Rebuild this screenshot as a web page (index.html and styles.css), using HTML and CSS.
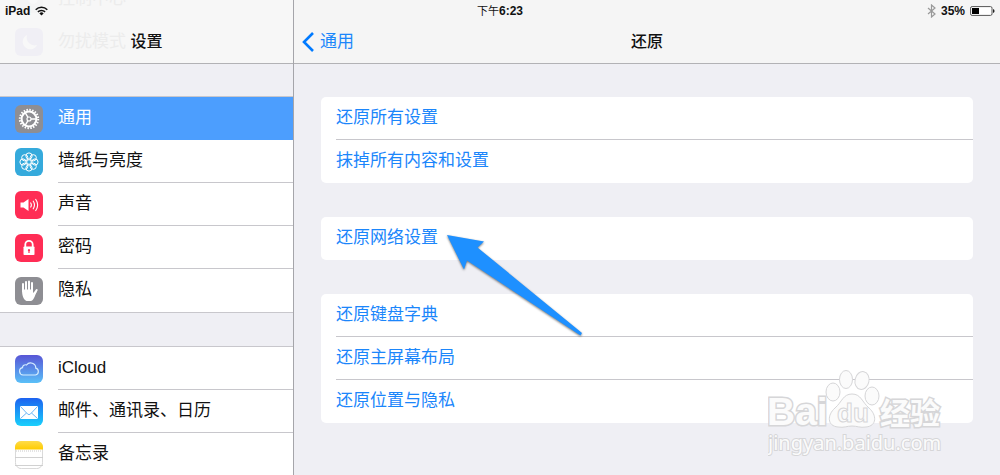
FILE: index.html
```html
<!DOCTYPE html>
<html lang="zh-CN">
<head>
<meta charset="utf-8">
<meta name="viewport" content="width=device-width, initial-scale=1">
<title>设置</title>
<link rel="stylesheet" href="styles.css">
</head>
<body>
<div class="app">
  <div class="status">
    <div class="status-left">
      <span>iPad</span>
      <svg class="wifi" viewBox="0 0 13 10" aria-hidden="true"><g fill="none" stroke="#111" stroke-width="1.5"><path d="M.7 3.7a8.3 8.3 0 0 1 11.6 0"/><path d="M2.9 5.9a5.1 5.1 0 0 1 7.2 0"/></g><path d="M6.5 9.6 4.4 7.4a3 3 0 0 1 4.2 0z" fill="#111"/></svg>
    </div>
    <div class="status-time"><span class="period">下午</span>6:23</div>
    <div class="status-right">
      <svg class="bluetooth" viewBox="0 0 9 14" aria-hidden="true"><path d="M1 4l7 6-3.5 3V1L8 4l-7 6" fill="none" stroke="#999" stroke-width="1.2"/></svg>
      <span>35%</span>
      <svg class="battery" viewBox="0 0 25 10" aria-hidden="true"><rect x=".6" y=".6" width="21.4" height="8.8" rx="1.5" fill="#fff" stroke="#555" stroke-width="1"/><rect x="2" y="2" width="7" height="6" fill="#000"/><path d="M23 3q1.6.4 1.6 2T23 7z" fill="#222"/></svg>
    </div>
  </div>

  <aside class="sidebar">
    <header class="bar">
      <div class="ghost" aria-hidden="true">
        <div class="ghost-row"><svg class="icon" viewBox="0 0 28 28"><rect width="28" height="28" rx="6" fill="#f4f4f4"/><circle cx="18" cy="14" r="5" fill="#f8f8f8"/></svg><span>控制中心</span></div>
        <div class="ghost-row"><svg class="icon" viewBox="0 0 28 28"><rect width="28" height="28" rx="6" fill="#f0eff5"/><path d="M12 7a7.5 7.5 0 1 0 10 10A8 8 0 0 1 12 7z" fill="#f8f8f8"/></svg><span>勿扰模式</span></div>
      </div>
      <h1 class="title">设置</h1>
    </header>
    <nav class="menu">
      <ul class="group">
        <li><a class="item active" href="#general">
          <svg class="icon" viewBox="0 0 28 28" aria-hidden="true"><rect width="28" height="28" rx="6" fill="#8e8e93"/><g fill="none" stroke="#fff"><circle cx="14" cy="14" r="9.2" stroke-width="2" stroke-dasharray="1.5 1.39"/><circle cx="14" cy="14" r="7.4" stroke-width="2"/><circle cx="14" cy="14" r="2" stroke-width="1.2"/><path d="M16 14h5M13 12.300l-3-5M13 15.700l-3 5" stroke-width="1.400"/></g></svg>
          <span class="label">通用</span></a></li>
        <li><a class="item" href="#wallpaper">
          <svg class="icon" viewBox="0 0 28 28" aria-hidden="true"><rect width="28" height="28" rx="6" fill="#35aadc"/><g fill="none" stroke="#fff" stroke-width="1"><circle cx="14" cy="14" r="2.300"/><circle cx="14" cy="8" r="3.100"/><circle cx="18.240" cy="9.760" r="3.100"/><circle cx="20" cy="14" r="3.100"/><circle cx="18.240" cy="18.240" r="3.100"/><circle cx="14" cy="20" r="3.100"/><circle cx="9.760" cy="18.240" r="3.100"/><circle cx="8" cy="14" r="3.100"/><circle cx="9.760" cy="9.760" r="3.100"/></g></svg>
          <span class="label">墙纸与亮度</span></a></li>
        <li><a class="item" href="#sound">
          <svg class="icon" viewBox="0 0 28 28" aria-hidden="true"><rect width="28" height="28" rx="6" fill="#ff2d55"/><path d="M5.500 11.500h3l5-3.500v12l-5-3.500h-3z" fill="#fff"/><g fill="none" stroke="#fff" stroke-width="1.100"><path d="M15.500 11.500q1.800 2.500 0 5"/><path d="M18 9.800q3 4.200 0 8.400"/><path d="M20.500 8q4.300 6 0 12"/></g></svg>
          <span class="label">声音</span></a></li>
        <li><a class="item" href="#passcode">
          <svg class="icon" viewBox="0 0 28 28" aria-hidden="true"><rect width="28" height="28" rx="6" fill="#ff2d55"/><path d="M10.300 13v-2.500a3.700 3.700 0 0 1 7.400 0V13" fill="none" stroke="#fff" stroke-width="1.800"/><rect x="8.500" y="12.500" width="11" height="8.500" rx=".8" fill="#fff"/><path d="M14 15a1.200 1.200 0 0 1 .6 2.200V19h-1.200v-1.800A1.200 1.200 0 0 1 14 15z" fill="#ff2d55"/></svg>
          <span class="label">密码</span></a></li>
        <li><a class="item" href="#privacy">
          <svg class="icon" viewBox="0 0 28 28" aria-hidden="true"><rect width="28" height="28" rx="6" fill="#8e8e93"/><g stroke="#fff" stroke-width="2" stroke-linecap="round" fill="none"><path d="M8 14V7M11 13V5M14 13V4.500M17 14V6"/><path d="M18.500 18l3.200-5"/></g><path d="M7 12.500h11v3.500l2.500-2 1.500.5c-2 3-2.500 8.500-6 9.500h-4.500C8 22 7 18 7 12.500z" fill="#fff"/></svg>
          <span class="label">隐私</span></a></li>
      </ul>
      <ul class="group">
        <li><a class="item" href="#icloud">
          <svg class="icon" viewBox="0 0 28 28" aria-hidden="true"><defs><linearGradient id="cloud" x2="0" y2="1"><stop stop-color="#5856d6"/><stop offset="1" stop-color="#5ac0f8"/></linearGradient></defs><rect width="28" height="28" rx="6" fill="url(#cloud)"/><path d="M8 20a3.700 3.700 0 0 1-.5-7.300 2.900 2.900 0 0 1 4-2.700 5.200 5.200 0 0 1 9.300 3.200A3.500 3.500 0 0 1 20.500 20z" fill="none" stroke="#d5edff" stroke-width="1.200"/></svg>
          <span class="label">iCloud</span></a></li>
        <li><a class="item" href="#mail">
          <svg class="icon" viewBox="0 0 28 28" aria-hidden="true"><defs><linearGradient id="mail" x2="0" y2="1"><stop stop-color="#1d62f0"/><stop offset="1" stop-color="#19d0fc"/></linearGradient></defs><rect width="28" height="28" rx="6" fill="url(#mail)"/><rect x="5" y="8" width="18" height="13" rx="1" fill="#fff"/><path d="M5.500 8.500l7 7.500q1.500 1.300 3 0l7-7.500M5.500 20.500l6-5.500M22.500 20.500l-6-5.500" fill="none" stroke="#5aaef5" stroke-width=".9"/></svg>
          <span class="label">邮件、通讯录、日历</span></a></li>
        <li><a class="item" href="#notes">
          <svg class="icon" viewBox="0 0 28 28" aria-hidden="true"><defs><linearGradient id="notes" x2="0" y2="1"><stop stop-color="#ffdc4a"/><stop offset="1" stop-color="#fc0"/></linearGradient></defs><rect x=".4" y=".4" width="27.200" height="27.200" rx="6" fill="#fff" stroke="#ccc" stroke-width=".8"/><path d="M0 8.500V6a6 6 0 0 1 6-6h16a6 6 0 0 1 6 6v2.500z" fill="url(#notes)"/><path d="M1 10h26" stroke="#bbb" stroke-width=".8" stroke-dasharray="1 1"/><path d="M0 16.500h28M0 24.500h28" stroke="#ccc" stroke-width=".9"/></svg>
          <span class="label">备忘录</span></a></li>
      </ul>
    </nav>
  </aside>

  <main class="detail">
    <header class="bar detail-bar">
      <a class="back" href="#general"><svg class="chevron" viewBox="0 0 12 20" aria-hidden="true"><path d="M11 1 2 10l9 9" fill="none" stroke="#007aff" stroke-width="2.600"/></svg><span>通用</span></a>
      <h2 class="title">还原</h2>
    </header>
    <div class="cards">
      <section class="card">
        <button class="action" type="button">还原所有设置</button>
        <button class="action" type="button">抹掉所有内容和设置</button>
      </section>
      <section class="card">
        <button class="action" type="button">还原网络设置</button>
      </section>
      <section class="card">
        <button class="action" type="button">还原键盘字典</button>
        <button class="action" type="button">还原主屏幕布局</button>
        <button class="action" type="button">还原位置与隐私</button>
      </section>
    </div>
    <svg class="arrow" viewBox="0 0 140 106" aria-hidden="true"><path d="M2 3 39 9.500 32.500 15.500 137 101 135.500 103.500 22 28.500 19 37.500z" fill="#1e90ff"/></svg>
    <svg class="watermark" viewBox="0 0 190 90" role="img" aria-label="Baidu 经验">
      <g class="mark">
        <text class="mark-latin" x="-1" y="58">Bai</text>
        <ellipse cx="65" cy="25" rx="7" ry="9"/>
        <ellipse cx="78" cy="12.500" rx="6.500" ry="9"/>
        <ellipse cx="94" cy="13.500" rx="7" ry="9" transform="rotate(12 94 13.500)"/>
        <ellipse cx="104" cy="29" rx="7" ry="9"/>
        <path d="M84 27c9 0 10 8 17 14 8 7 8 18-3 19-6 1-9-1-14-1s-8 2-14 1c-11-1-11-12-3-19 7-6 8-14 17-14z"/>
        <text class="mark-du" x="69" y="55">du</text>
        <text class="mark-cjk" x="112" y="57">经验</text>
        <text class="mark-url" x="0" y="83">jingyan.baidu.com</text>
      </g>
    </svg>
  </main>
</div>
</body>
</html>
```

FILE: styles.css
```css
* {
  box-sizing: border-box;
}

body {
  margin: 0;
  background: #efeff4;
  color: #111;
  font-family: "Liberation Sans", "Noto Sans CJK SC", sans-serif;
  font-size: 17px;
  line-height: 20px;
}

.app {
  display: grid;
  grid-template-columns: 294px 1fr;
  grid-template-rows: minmax(0, 1fr);
  height: 100vh;
  overflow: hidden;
}

.status {
  grid-area: 1 / 1 / 2 / 3;
  align-self: start;
  z-index: 2;
  display: grid;
  grid-template-columns: 1fr auto 1fr;
  align-items: center;
  height: 21px;
  padding: 0 5px;
  font-size: 12px;
  font-weight: bold;
}

.period {
  font-size: 11px;
  font-weight: 400;
}

.status-left,
.status-right {
  display: flex;
  align-items: center;
  gap: 5px;
}

.status-right {
  justify-content: flex-end;
}

.wifi {
  width: 13px;
  height: 10px;
}

.bluetooth {
  width: 9px;
  height: 14px;
}

.battery {
  width: 25px;
  height: 10px;
}

.sidebar {
  grid-area: 1 / 1;
  overflow: hidden;
  border-right: 1px solid #a5a5aa;
}

.detail {
  grid-area: 1 / 2;
  position: relative;
  overflow: hidden;
}

.bar {
  display: grid;
  grid-template-rows: 63px;
  align-items: center;
  border-bottom: 1px solid #b2b2b5;
  background: #f7f7f7;
}

.detail-bar {
  grid-template-columns: 1fr auto 1fr;
  background: #f5f5f5;
}

.title {
  grid-area: 1 / 1;
  justify-self: center;
  margin: 0;
  padding-top: 20px;
  font-size: 16px;
  font-weight: 500;
}

.detail-bar .title {
  grid-area: 1 / 2;
}

.ghost {
  grid-area: 1 / 1;
  align-self: end;
  display: flex;
  flex-direction: column;
  justify-content: flex-end;
  height: 63px;
  overflow: hidden;
  color: #ececec;
}

.ghost-row {
  display: flex;
  flex: none;
  align-items: center;
  gap: 15px;
  height: 43px;
  padding-left: 15px;
}

.back {
  display: flex;
  align-items: center;
  gap: 6px;
  padding: 20px 0 0 8px;
  color: #1b86fb;
  font-size: 17px;
  text-decoration: none;
}

.chevron {
  width: 12px;
  height: 20px;
}

.menu,
.cards {
  display: flex;
  flex-direction: column;
  gap: 34px;
  padding-top: 33px;
}

.menu {
  padding-top: 32px;
}

.group {
  margin: 0;
  padding: 0;
  border-top: 1px solid #c8c7cc;
  border-bottom: 1px solid #c8c7cc;
  background: #fff;
  list-style: none;
}

.group + .group {
  margin-top: -1px;
}

.item {
  display: flex;
  align-items: center;
  gap: 15px;
  height: 43px;
  padding-left: 15px;
  color: #111;
  text-decoration: none;
}

.icon {
  flex: none;
  width: 28px;
  height: 28px;
}

.label {
  display: flex;
  flex: 1;
  align-items: center;
  align-self: stretch;
  border-bottom: 1px solid #c8c7cc;
}

.active .label,
.group li:last-child .label {
  border-color: transparent;
}

.active {
  background: #4c9efe;
  color: #fff;
}

.cards {
  padding-right: 27px;
  padding-left: 27px;
}

.card {
  display: flex;
  flex-direction: column;
  padding-left: 15px;
  border-radius: 5px;
  background: #fff;
}

.action {
  height: 43px;
  padding: 0;
  border: 0;
  border-bottom: 1px solid #c8c7cc;
  background: none;
  color: #1b86fb;
  font: inherit;
  text-align: left;
}

.action:last-child {
  border-color: transparent;
}

.arrow {
  position: absolute;
  top: 232px;
  left: 151px;
  width: 140px;
  height: 106px;
  overflow: visible;
  filter: drop-shadow(0 1px 1px #0008);
}

.watermark {
  position: absolute;
  right: 42px;
  bottom: 18px;
  width: 190px;
  height: 90px;
}

.mark {
  fill: #fbfbfb;
  stroke: #d6d6d8;
  stroke-width: 1px;
}

.mark-latin {
  font-size: 39px;
  font-weight: bold;
  paint-order: stroke;
  stroke-width: 3px;
}

.mark-du {
  font-size: 26px;
  font-weight: bold;
}

.mark-cjk {
  font-size: 30px;
  font-weight: bold;
  paint-order: stroke;
  stroke-width: 3px;
}

.mark-url {
  font-family: "Noto Sans", sans-serif;
  font-size: 20px;
  paint-order: stroke;
  stroke-width: 2px;
}
```
